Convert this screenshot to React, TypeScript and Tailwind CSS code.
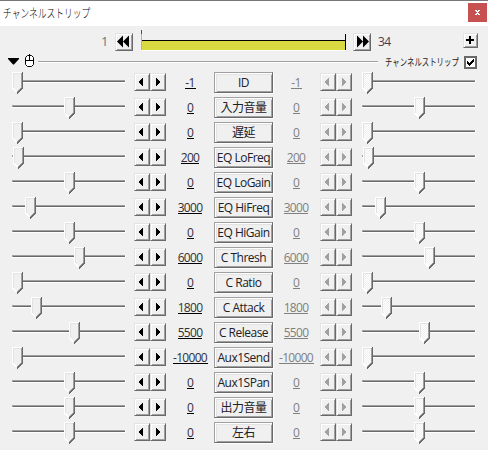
const rows: [string, string, number, number][] = [
  ["ID", "-1", 0, 11],
  ["入力音量", "0", 52, 7],
  ["遅延", "0", 0, 7],
  ["EQ LoFreq", "200", 1, 18],
  ["EQ LoGain", "0", 52, 7],
  ["EQ HiFreq", "3000", 13, 24],
  ["EQ HiGain", "0", 52, 7],
  ["C Thresh", "6000", 62, 24],
  ["C Ratio", "0", 0, 7],
  ["C Attack", "1800", 19, 24],
  ["C Release", "5500", 57, 24],
  ["Aux1Send", "-10000", 0, 35],
  ["Aux1SPan", "0", 52, 7],
  ["出力音量", "0", 52, 7],
  ["左右", "0", 52, 7],
];

const raised =
  "border border-t-[#e3e3e3] border-l-[#e3e3e3] border-r-[#696969] border-b-[#696969] shadow-[inset_1px_1px_0_#fff,inset_-1px_-1px_0_#a0a0a0] bg-[#f0f0f0]";

function Slider({ value, off }: { value: number; off?: boolean }) {
  return (
    <svg width="114" height="24" className="block shrink-0" shapeRendering="crispEdges">
      <defs>
        <pattern id="dither" width="2" height="2" patternUnits="userSpaceOnUse">
          <rect width="2" height="2" fill="#f0f0f0" />
          <rect width="1" height="1" fill="#fff" />
          <rect x="1" y="1" width="1" height="1" fill="#fff" />
        </pattern>
      </defs>
      <rect y="8" width="114" height="3" fill="#fff" />
      <rect y="8" width="113" height="1" fill="#a0a0a0" />
      <rect y="9" width="1" height="1" fill="#a0a0a0" />
      <rect x="1" y="9" width="112" height="1" fill="#696969" />
      <g transform={`translate(${value} 0)`}>
        <path d="M0 0H11V16h-1v1h-1v1h-1v1h-1v1h-1v1h-1v-1h-1v-1h-1v-1h-1v-1h-1v-1h-1Z" fill={off ? "url(#dither)" : "#f0f0f0"} />
        <path d="M0 0H10V1H1V16h1v1h1v1h1v1h1v1h-1v-0h-1v-1h-1v-1h-1v-1h-1Z" fill="#fff" />
        <path d="M1 1H9V2H2V16H1Z" fill="#e3e3e3" />
        <path d="M9 1h1v15h-1v1h-1v1h-1v1h-1v1h-1v-1h1v-1h1v-1h1v-1h1Z" fill="#a0a0a0" />
        <path d="M10 0h1v17h-1v1h-1v1h-1v1h-1v1h-1v1h-1v-2h1v-1h1v-1h1v-1h1v-1h1Z" fill="#696969" />
      </g>
    </svg>
  );
}

function Arrow({ right, off }: { right?: boolean; off?: boolean }) {
  return (
    <span className={`block h-[18px] w-4 ${raised}`}>
      <svg width="14" height="16" className="block" shapeRendering="crispEdges">
        <path
          d={right ? "M5 4h1v1h1v1h1v1h1v2h-1v1h-1v1h-1v1h-1Z" : "M8 4h-1v1h-1v1h-1v1h-1v2h1v1h1v1h1v1h1Z"}
          fill={off ? "#a0a0a0" : "#000"}
        />
      </svg>
    </span>
  );
}

function Arrows({ off }: { off?: boolean }) {
  return (
    <div className="mt-px flex w-8 shrink-0">
      <Arrow off={off} />
      <Arrow off={off} right />
    </div>
  );
}

function Value({ text, width, off }: { text: string; width: number; off?: boolean }) {
  return (
    <div className="flex w-12 shrink-0 justify-center">
      <div
        className={`mt-[3px] flex h-[14px] justify-center border-b text-[12px] leading-[16px] tracking-[-0.7px] whitespace-nowrap ${
          off ? "border-[#808080] text-[#808080]" : "border-black text-[#303038]"
        }`}
        style={{ width }}
      >
        {text}
      </div>
    </div>
  );
}

function Skip({ right }: { right?: boolean }) {
  return (
    <div className={`mt-[7px] size-[18px] shrink-0 ${raised}`}>
      <svg width="16" height="16" className={right ? "block -scale-x-100" : "block"}>
        <path d="M1 7.5L7 1.5V13.5ZM7 7.5L13 1.5V13.5Z" fill="#000" />
      </svg>
    </div>
  );
}

export default function App() {
  return (
    <div className="h-[450px] w-[488px] overflow-hidden bg-[#f0f0f0] font-['Open_Sans','Noto_Sans_CJK_JP',sans-serif] text-[12px] text-black">
      <header className="flex h-[26px] justify-between border-t border-[#777] bg-white pr-px pl-[3px]">
        <span className="origin-left scale-x-[0.73] pt-[2px] font-['Noto_Sans_CJK_JP',sans-serif] text-[12px] leading-[20px] font-light whitespace-nowrap text-black">
          チャンネルストリップ
        </span>
        <div className="mt-[2px] flex size-[19px] items-center justify-center bg-[#c75050]">
          <svg width="5" height="5" shapeRendering="crispEdges">
            <path d="M0 0h2v1h1v-1h2v1h-1v1h-1v1h1v1h1v1h-2v-1h-1v1h-2v-1h1v-1h1v-1h-1v-1h-1Z" fill="#fff" />
          </svg>
        </div>
      </header>

      <div className="flex h-[27px]">
        <span className="w-[115px] pt-[8px] pr-[7px] text-right leading-4 text-[#4c7884]">1</span>
        <Skip />
        <svg width="220" height="27" className="shrink-0" shapeRendering="crispEdges">
          <rect x="8" y="15" width="205" height="9" fill="#d9d941" />
          <rect x="8" y="24" width="205" height="1" fill="#fff" />
          <rect x="8" y="14" width="204" height="1" fill="#000" />
          <rect x="8" y="4" width="1" height="20" fill="#40e0e8" />
          <rect x="8" y="4" width="1" height="4" fill="#f00" />
          <rect x="212" y="8" width="1" height="16" fill="#000" />
        </svg>
        <Skip right />
        <span className="w-[92px] pt-[8px] pl-[7px] leading-4 tracking-[-0.7px] text-[#4c3850]">34</span>
        <div className={`mt-[7px] size-[15px] ${raised}`}>
          <svg width="13" height="13" className="block" shapeRendering="crispEdges">
            <path d="M5 2h2v3h3v2h-3v3h-2v-3h-3v-2h3Z" fill="#000" />
          </svg>
        </div>
      </div>

      <div className="flex h-[19px] pl-2">
        <svg width="27" height="19" className="shrink-0">
          <path d="M0 5H11V6L6 11.5H5L0 6Z" fill="#000" />
          <path d="M19.5 2.5h4l2 2v7l-2 2h-4l-2-2v-7ZM17.5 7.5h8M21.5 1v6" fill="#fff" stroke="#000" />
        </svg>
        <div className="mt-[8px] ml-[3px] h-[2px] w-[340px] border-t border-[#a0a0a0] bg-white" />
        <div className="ml-[7px] h-[18px] w-[79px]">
          <span className="block w-max origin-left scale-x-[0.74] font-['Noto_Sans_CJK_JP',sans-serif] text-[10px] leading-[18px] whitespace-nowrap text-[#181818]">
            チャンネルストリップ
          </span>
        </div>
        <div className="mt-[3px] size-[13px] shrink-0 border-2 border-[#696969] bg-white">
          <svg width="9" height="9" className="block" shapeRendering="crispEdges">
            <path d="M1 3h1v1h1v1h1v-1h1v-1h1v-1h1v-1h1v3h-1v1h-1v1h-1v1h-1v1h-1v-1h-1v-1h-1Z" fill="#000" />
          </svg>
        </div>
      </div>

      <main className="flex flex-col">
        {rows.map(([label, value, thumb, width]) => (
          <div key={label} className="flex h-[25px] pl-3">
            <Slider value={thumb} />
            <div className="flex pl-2">
              <Arrows />
              <Value text={value} width={width} />
            </div>
            <div className="h-[21px] w-[59px] shrink-0 border border-[#a0a0a0] border-r-[#696969] border-b-[#696969] bg-[#f0f0f0] text-center text-[12px] leading-[20px] whitespace-nowrap shadow-[inset_1px_1px_0_#fff,inset_2px_2px_0_#e3e3e3,inset_-1px_-1px_0_#a0a0a0,1px_1px_0_#fff]">
              <span className="-mx-2 inline-block tracking-[-0.5px] text-[#202028]">{label}</span>
            </div>
            <div className="ml-[-1px] flex">
              <Value text={value} width={width} off />
              <Arrows off />
            </div>
            <div className="pl-[10px]">
              <Slider value={thumb} off />
            </div>
          </div>
        ))}
      </main>
    </div>
  );
}
